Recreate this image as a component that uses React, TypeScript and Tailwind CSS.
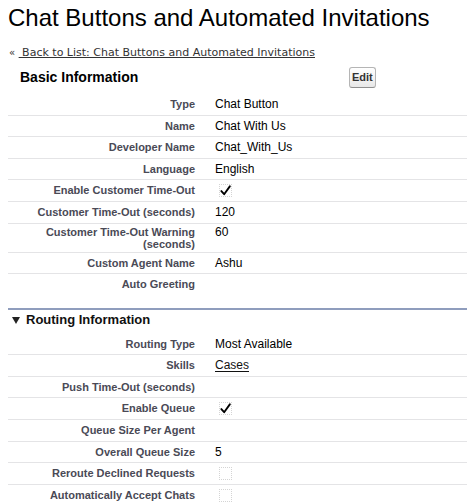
type Field = {
  label: string;
  value?: string;
  kind?: "text" | "link" | "checked" | "unchecked";
  tall?: boolean;
};

const basicFields: Field[] = [
  { label: "Type", value: "Chat Button" },
  { label: "Name", value: "Chat With Us" },
  { label: "Developer Name", value: "Chat_With_Us" },
  { label: "Language", value: "English" },
  { label: "Enable Customer Time-Out", kind: "checked" },
  { label: "Customer Time-Out (seconds)", value: "120" },
  { label: "Customer Time-Out Warning (seconds)", value: "60", tall: true },
  { label: "Custom Agent Name", value: "Ashu" },
  { label: "Auto Greeting" },
];

const routingFields: Field[] = [
  { label: "Routing Type", value: "Most Available" },
  { label: "Skills", value: "Cases", kind: "link" },
  { label: "Push Time-Out (seconds)" },
  { label: "Enable Queue", kind: "checked" },
  { label: "Queue Size Per Agent" },
  { label: "Overall Queue Size", value: "5" },
  { label: "Reroute Declined Requests", kind: "unchecked" },
  { label: "Automatically Accept Chats", kind: "unchecked" },
];

function CheckBox({ checked }: { checked: boolean }) {
  return (
    <span className="ml-[4px] flex h-[13px] w-[13px] items-center justify-center border border-dotted border-[#d4d4d4]">
      {checked && (
        <svg width="13" height="13" viewBox="0 0 13 13" className="-mt-[1px]">
          <path d="M1.6 7.2 L4.9 10.9 L11.6 1.6" fill="none" stroke="#000" strokeWidth="2.2" strokeLinecap="round" strokeLinejoin="round" />
        </svg>
      )}
    </span>
  );
}

function FieldRow({ field, last }: { field: Field; last: boolean }) {
  const label = field.tall ? (
    <>
      Customer Time-Out Warning
      <br />
      (seconds)
    </>
  ) : (
    field.label
  );

  let value: React.ReactNode = null;
  if (field.kind === "checked") value = <CheckBox checked />;
  else if (field.kind === "unchecked") value = <CheckBox checked={false} />;
  else if (field.kind === "link") value = <a className="text-[#111] underline underline-offset-2">{field.value}</a>;
  else if (field.value) value = field.value;

  return (
    <div
      className={`grid grid-cols-[187px_1fr] items-start ${field.tall ? "py-[2px]" : "py-[4px]"} ${
        last ? "" : "border-b border-[#e4e4e6]"
      }`}
    >
      <div className={`text-right text-[11px] font-bold text-[#4a4a56] ${field.tall ? "leading-[12px]" : "leading-[12.5px]"}`}>
        {label}
      </div>
      <div className="flex min-h-[12.5px] items-center pl-[20px] text-[12px] leading-[12.5px] text-black">{value}</div>
    </div>
  );
}

export default function App() {
  return (
    <div className="min-h-[504px] bg-white pl-2 font-['Liberation_Sans',Arial,sans-serif]">
      <h1 className="pt-1 text-[24px] leading-[28px] text-black">Chat Buttons and Automated Invitations</h1>

      <div className="mt-[14px] pl-[1px] font-['DejaVu_Sans',Verdana,sans-serif] text-[11px] leading-[14px] text-[#333]">
        <span className="text-[10px]">«</span>{" "}
        <a className="underline">&nbsp;Back to List: Chat Buttons and Automated Invitations</a>
      </div>

      <div className="mt-[6px] flex h-[22px] items-center pl-3">
        <h2 className="w-[329px] text-[14px] font-bold text-black">Basic Information</h2>
        <button className="h-[21px] rounded-[3px] border border-[#b5b5b5] border-b-[#8f8f8f] bg-linear-to-b from-white to-[#e8e8e8] px-[2px] text-[11px] font-bold text-[#333]">
          Edit
        </button>
      </div>

      <div className="mt-[6px]">
        {basicFields.map((f, i) => (
          <FieldRow key={f.label} field={f} last={i === basicFields.length - 1} />
        ))}
      </div>

      <div className="mt-[13px] border-t-2 border-[#8f9dbd]">
        <div className="flex h-[21px] items-center pl-[4px]">
          <svg width="8" height="7" viewBox="0 0 8 7" className="mr-[6px]">
            <path d="M0 0 H8 L4 7 Z" fill="#222" />
          </svg>
          <h3 className="text-[13px] font-bold text-[#111]">Routing Information</h3>
        </div>
      </div>

      <div className="mt-[3px]">
        {routingFields.map((f, i) => (
          <FieldRow key={f.label} field={f} last={i === routingFields.length - 1} />
        ))}
      </div>
    </div>
  );
}
